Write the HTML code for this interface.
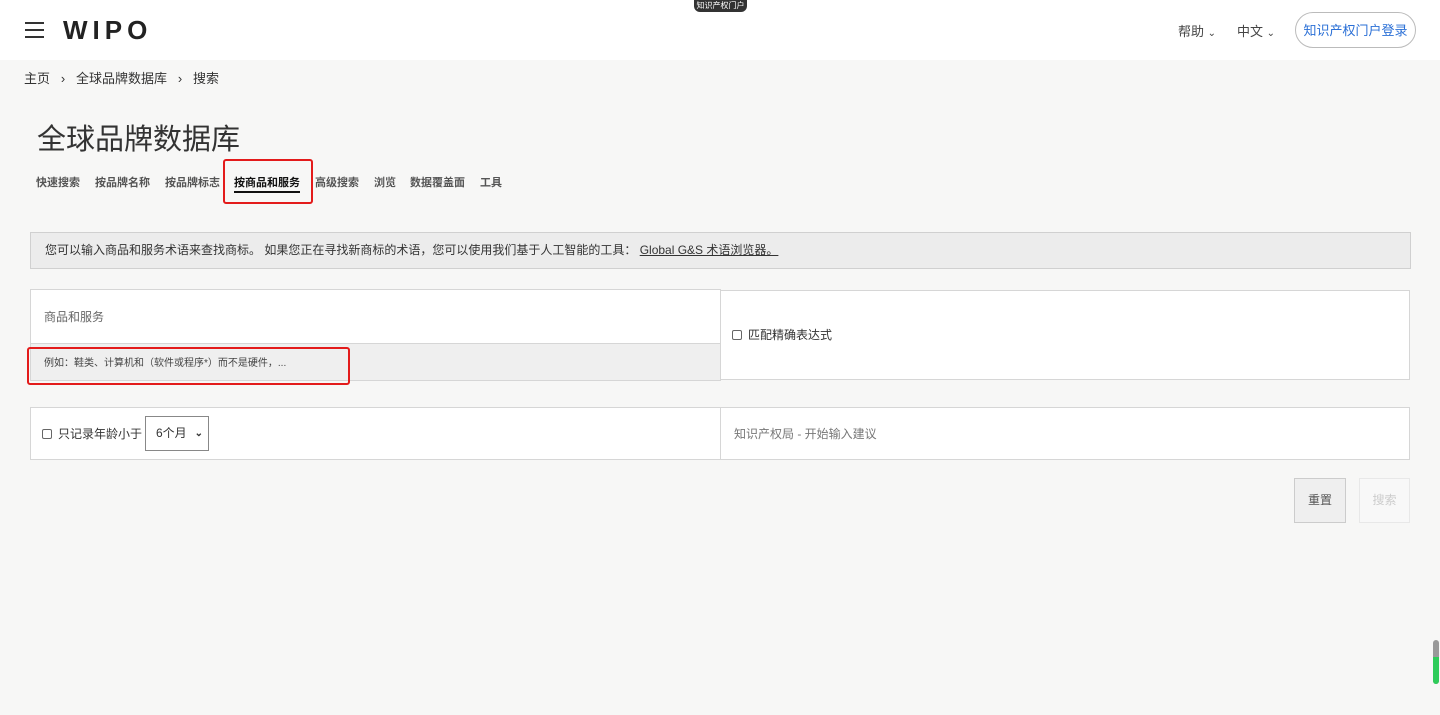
<!DOCTYPE html>
<html><head><meta charset="utf-8"><style>
*{box-sizing:border-box;margin:0;padding:0}
body{width:1440px;height:715px;background:#f7f7f6;font-family:"Liberation Sans","Noto Sans CJK SC",sans-serif;color:#333;position:relative;overflow:hidden}
.hdr{position:absolute;left:0;top:0;width:1440px;height:60px;background:#fff}
.abs{position:absolute}
.bc{top:68px;left:24px;font-size:13px;color:#333}
.box{position:absolute;background:#fff;border:1px solid #d6d6d6}
.tabs span{position:absolute;top:0;white-space:nowrap;font-weight:600}
</style></head><body>
<div class="hdr">
 <div class="abs" style="left:25px;top:22px;width:19px;height:2px;background:#333"></div>
 <div class="abs" style="left:25px;top:29px;width:19px;height:2px;background:#333"></div>
 <div class="abs" style="left:25px;top:36px;width:19px;height:2px;background:#333"></div>
 <div class="abs" style="left:63px;top:15px;font-size:26px;font-weight:bold;letter-spacing:5px;color:#222">WIPO</div>
 <div class="abs" style="left:694px;top:0;width:53px;height:12px;background:#333;border-radius:0 0 6px 6px;color:#fff;font-size:8px;text-align:center;line-height:12px">知识产权门户</div>
 <div class="abs" style="left:1178px;top:21px;font-size:13px;color:#444">帮助 <span style="font-size:10px">⌄</span></div>
 <div class="abs" style="left:1237px;top:21px;font-size:13px;color:#444">中文 <span style="font-size:10px">⌄</span></div>
 <div class="abs" style="left:1295px;top:12px;width:121px;height:36px;border:1px solid #bbb;border-radius:18px;color:#2a6fd6;font-size:13px;text-align:center;line-height:36px">知识产权门户登录</div>
</div>
<div class="abs bc">主页 &nbsp;&nbsp;›&nbsp;&nbsp; 全球品牌数据库 &nbsp;&nbsp;›&nbsp;&nbsp; 搜索</div>
<div class="abs" style="left:37px;top:116px;font-size:29px;color:#333">全球品牌数据库</div>
<div class="abs tabs" style="left:0;top:174px;font-size:11px;color:#555">
<span style="left:36px">快速搜索</span><span style="left:95px">按品牌名称</span><span style="left:165px">按品牌标志</span><span style="left:234px;color:#111;font-weight:bold;border-bottom:2px solid #111;padding-bottom:1px">按商品和服务</span><span style="left:315px">高级搜索</span><span style="left:374px">浏览</span><span style="left:410px">数据覆盖面</span><span style="left:480px">工具</span></div>
<div class="abs" style="left:223px;top:159px;width:90px;height:45px;border:2px solid #e31b1b;border-radius:3px"></div>
<div class="abs" style="left:30px;top:232px;width:1381px;height:37px;background:#ececec;border:1px solid #d0d0d0;font-size:12px;line-height:35px;padding-left:14px;color:#333">您可以输入商品和服务术语来查找商标。 如果您正在寻找新商标的术语，您可以使用我们基于人工智能的工具： <u>Global G&amp;S 术语浏览器。</u></div>
<div class="box" style="left:30px;top:289px;width:691px;height:92px"></div>
<div class="abs" style="left:44px;top:308px;font-size:12px;color:#666">商品和服务</div>
<div class="abs" style="left:31px;top:343px;width:689px;height:37px;background:#efefef;border-top:1px solid #d6d6d6"></div>
<div class="abs" style="left:44px;top:354px;font-size:10px;color:#444">例如：鞋类、计算机和（软件或程序*）而不是硬件，...</div>
<div class="abs" style="left:27px;top:347px;width:323px;height:38px;border:2px solid #e31b1b;border-radius:3px"></div>
<div class="box" style="left:720px;top:290px;width:690px;height:90px"></div>
<div class="abs" style="left:732px;top:330px;width:10px;height:10px;border:1px solid #666;border-radius:2px;background:#fff"></div>
<div class="abs" style="left:748px;top:326px;font-size:12px">匹配精确表达式</div>
<div class="box" style="left:30px;top:407px;width:691px;height:53px"></div>
<div class="abs" style="left:42px;top:429px;width:10px;height:10px;border:1px solid #666;border-radius:2px;background:#fff"></div>
<div class="abs" style="left:58px;top:425px;font-size:12px">只记录年龄小于</div>
<div class="abs" style="left:145px;top:416px;width:64px;height:35px;border:1px solid #888;background:#fff;font-size:12px;line-height:33px;padding-left:10px">6个月 <span style="position:absolute;right:5px;font-size:10px;font-weight:bold">⌄</span></div>
<div class="box" style="left:720px;top:407px;width:690px;height:53px"></div>
<div class="abs" style="left:734px;top:425px;font-size:12px;color:#777">知识产权局 - 开始输入建议</div>
<div class="abs" style="left:1294px;top:478px;width:52px;height:45px;background:#efefef;border:1px solid #ccc;font-size:12px;color:#555;text-align:center;line-height:43px">重置</div>
<div class="abs" style="left:1359px;top:478px;width:51px;height:45px;background:#f8f8f8;border:1px solid #e8e8e8;font-size:12px;color:#ccc;text-align:center;line-height:43px">搜索</div>
<div class="abs" style="left:1433px;top:640px;width:6px;height:44px;background:#999;border-radius:3px"></div>
<div class="abs" style="left:1433px;top:657px;width:6px;height:27px;background:#2ecc5a;border-radius:0 0 3px 3px"></div>
</body></html>
